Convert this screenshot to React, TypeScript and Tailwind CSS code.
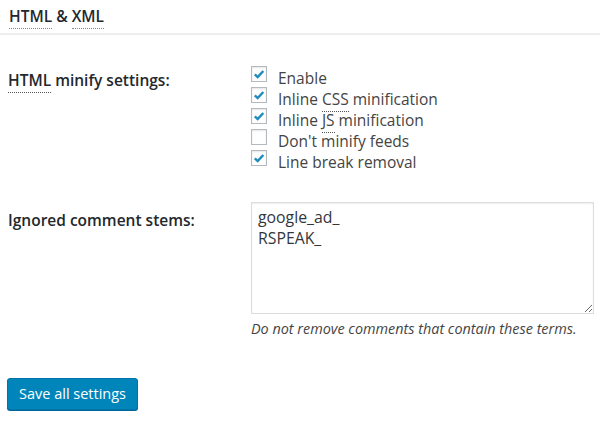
import React from "react";

const Check = ({ checked }: { checked: boolean }) => (
  <span className="flex h-[16px] w-[16px] shrink-0 items-center justify-center border border-[#b4b9be] bg-white shadow-[inset_0_1px_2px_rgba(0,0,0,0.1)]">
    {checked && (
      <svg width="14" height="14" viewBox="0 0 14 14">
        <path d="M2.8 7.3 L5.7 10.1 L11.3 4" fill="none" stroke="#1e8cbe" strokeWidth="2.4" strokeLinecap="butt" strokeLinejoin="miter" />
      </svg>
    )}
  </span>
);

const Abbr = ({ children }: { children: React.ReactNode }) => (
  <span className="border-b border-dotted border-[#555] pb-[1px]">{children}</span>
);

export default function App() {
  const opts: [React.ReactNode, boolean][] = [
    ["Enable", true],
    [<>Inline <Abbr>CSS</Abbr> minification</>, true],
    [<>Inline <Abbr>JS</Abbr> minification</>, true],
    ["Don't minify feeds", false],
    ["Line break removal", true],
  ];
  return (
    <div className="h-[421px] w-[600px] bg-white text-[#444] [font-family:'Open_Sans',sans-serif]">
      <div className="border-b-2 border-[#eeeeee] px-[9px] pt-[6px] pb-[7px]">
        <h2 className="text-[15.5px] font-semibold leading-[20px] text-[#23282d]">
          <span className="border-b border-dotted border-[#888] pb-[1px]">HTML</span> &amp;{" "}
          <span className="border-b border-dotted border-[#888] pb-[1px]">XML</span>
        </h2>
      </div>
      <div className="flex pt-[31px]">
        <div className="w-[251px] pl-[8px] pt-[4px] text-[15.5px] font-semibold leading-[21px] text-[#23282d]">
          <Abbr>HTML</Abbr> minify settings:
        </div>
        <div className="flex flex-col">
          {opts.map(([label, c], i) => (
            <label key={i} className="flex h-[21px] items-start gap-[11px] text-[15.5px]">
              <Check checked={c} />
              <span className="mt-[2px] leading-[21px]">{label}</span>
            </label>
          ))}
        </div>
      </div>
      <div className="flex pt-[31px]">
        <div className="w-[251px] pl-[8px] pt-[8px] text-[15.5px] font-semibold leading-[21px] text-[#23282d]">
          Ignored comment stems:
        </div>
        <div className="flex flex-col">
          <textarea
            className="h-[112px] w-[343px] resize border border-[#dddddd] px-[6px] py-[4px] text-[15.8px] leading-[21px] text-[#32373c] shadow-[inset_0_1px_2px_rgba(0,0,0,0.07)] outline-none"
            defaultValue={"google_ad_\nRSPEAK_"}
          />
          <p className="pt-[5px] text-[14.4px] italic leading-[20px] text-[#444]">
            Do not remove comments that contain these terms.
          </p>
        </div>
      </div>
      <div className="pl-[7px] pt-[39px]">
        <button className="h-[32px] rounded-[3px] border border-[#0073aa] bg-[#0085ba] px-[11px] text-[14.5px] text-white shadow-[0_1px_0_#006799]">
          Save all settings
        </button>
      </div>
    </div>
  );
}
